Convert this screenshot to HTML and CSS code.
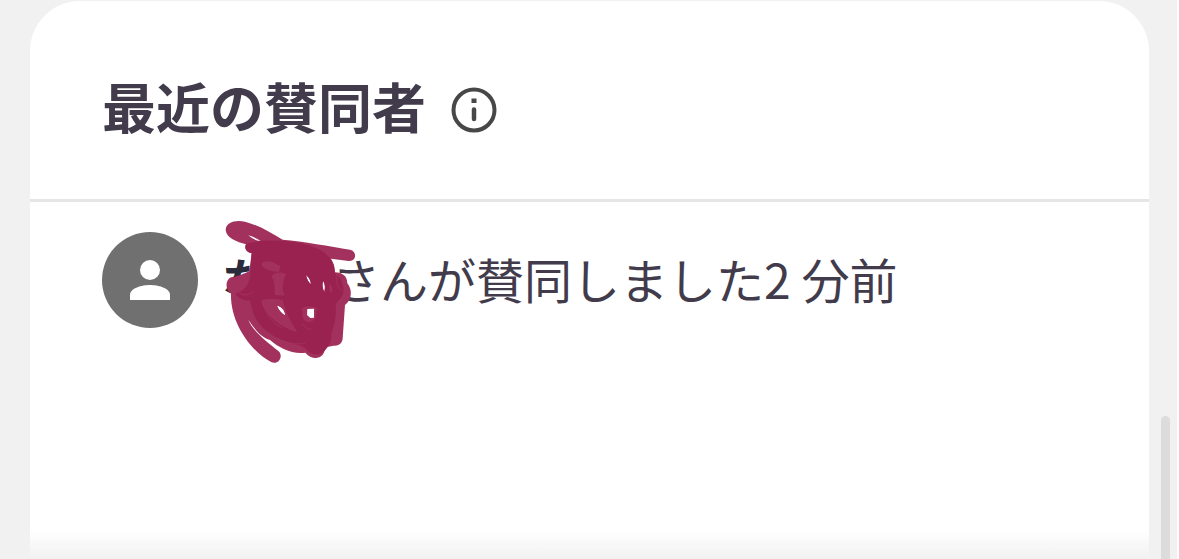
FILE: index.html
```
<!DOCTYPE html>
<html lang="ja">
<head>
  <meta charset="UTF-8" />
  <title>最近の賛同者</title>
  <meta name="viewport" content="width=device-width, initial-scale=1.0" />
  <link rel="stylesheet" href="styles.css">
</head>
<body>

  <section class="card">
    <header class="card-header">
      <h2>最近の賛同者</h2>
      <button class="info-btn" type="button" aria-label="詳細">
        <svg viewBox="0 0 46 46" aria-hidden="true">
          <circle cx="23" cy="23" r="20.5" fill="none" stroke="currentColor" stroke-width="4" />
          <rect x="20.5" y="11.5" width="5" height="4.5" fill="currentColor" />
          <path d="M23 22.500v9.500" stroke="currentColor" stroke-width="4.500" stroke-linecap="round" />
        </svg>
      </button>
    </header>

    <ul class="supporters">
      <li class="supporter">
        <svg class="avatar" viewBox="0 0 96 96" aria-hidden="true">
          <circle cx="48" cy="48" r="48" fill="#707070" />
          <circle cx="48" cy="38" r="10" fill="#fff" />
          <path d="M28 68v-5c0-7 12-10 20-10s20 3 20 10v5z" fill="#fff" />
        </svg>
        <p>
          <span class="name"><strong>な</strong>
            <svg class="scribble" viewBox="0 0 420 450" aria-hidden="true">
              <path class="ink" d="M17 45C18 22 45 14 75 20C115 30 155 55 188 74C250 78 330 95 390 104C412 108 410 140 386 138L333 131C340 142 345 155 345 172C362 172 382 180 382 205C398 225 396 255 375 270L368 370C368 385 355 394 340 392L322 396C310 408 315 415 303 424C290 434 268 428 256 413C215 418 180 400 150 375C125 368 105 345 85 314C98 348 140 380 175 408C192 422 176 450 155 442C100 415 30 330 33 235C15 225 15 195 33 187C50 184 65 180 88 168L95 114C80 114 72 100 78 88C50 80 20 70 17 45Z
                M85 61C96 70 106 77 122 78C110 70 98 65 85 61Z
                M258 180C261 192 265 202 273 208C272 195 266 186 258 180Z
                M309 198C306 210 308 222 313 231C316 217 315 206 309 198Z
                M172 273C178 286 186 295 195 300C193 287 185 277 172 273Z
                M262 282L261 300L271 309L282 308L282 281Z" />
              <path class="ink-layer" d="M78 88C120 72 190 75 250 86C295 98 325 113 338 145C346 160 340 175 354 184C372 199 378 239 358 254L347 266C350 300 343 337 333 358C338 382 322 401 303 416C288 424 266 414 254 398C225 385 180 382 146 352C115 333 97 299 90 256C70 259 50 247 47 235C68 230 87 213 90 184L95 114C80 114 72 100 78 88Z
                M124 150C128 132 157 138 181 154L177 171C161 170 133 166 124 150Z
                M154 183C164 170 184 170 199 178C183 204 188 230 194 242L165 240C164 218 164 200 154 183Z
                M124 256C149 250 168 252 188 256C196 290 214 326 232 351C199 345 134 309 124 256Z
                M258 180C261 192 265 202 273 208C272 195 266 186 258 180Z
                M309 198C306 210 308 222 313 231C316 217 315 206 309 198Z
                M246 281C251 272 278 274 290 280L287 309C275 326 258 325 248 309Z
                M328 205C339 216 340 229 330 235Z" />
              <path class="ink-hole" d="M172 273C178 286 186 295 195 300C193 287 185 277 172 273Z" />
              <path class="ink-line" d="M164 153c8 3 12 3 17 1M172 180v60M164 237h15M128 263c8 31 28 62 58 76M248 327c8 12 18 17 30 15" />
              <path class="ink-line" d="M172 370c28 15 58 20 84 15M349 180c-2 20 5 40 18 49M55 232c18 12 36 8 46-4" />
            </svg>
          </span><span>さんが賛同しました</span><time>2 分前</time>
        </p>
      </li>
    </ul>
  </section>

  <div class="bottom-fade"></div>
  <div class="scroll-thumb"></div>

</body>
</html>
```

FILE: styles.css
```
* {
  box-sizing: border-box;
}

body {
  margin: 0;
  min-height: 100vh;
  padding: 1px 28px 0 30px;
  display: flex;
  flex-direction: column;
  background: #f1f1f1;
  border-right: 2px solid #fff;
  color: #413b4b;
  font-family: "Noto Sans CJK JP", sans-serif;
}

.card {
  flex: 1;
  background: #fff;
  border-radius: 50px 50px 0 0;
}

.card-header {
  display: flex;
  align-items: center;
  gap: 25px;
  padding: 69px 72px 49px;
  border-bottom: 3px solid #e6e6e6;
}

.card-header h2 {
  margin: 0;
  padding-bottom: 8px;
  font-size: 54px;
  line-height: 72px;
  font-weight: 700;
}

.info-btn {
  width: 46px;
  height: 46px;
  padding: 0;
  border: none;
  background: none;
  color: #474747;
  cursor: pointer;
}

.info-btn svg {
  display: block;
}

.supporters {
  list-style: none;
  margin: 0;
  padding: 30px 72px;
}

.supporter {
  display: flex;
  align-items: center;
  gap: 24px;
}

.avatar {
  width: 96px;
  height: 96px;
  flex-shrink: 0;
}

.supporter p {
  margin: 0;
  padding-bottom: 4px;
  display: flex;
  font-size: 48px;
  line-height: 72px;
}

.name {
  position: relative;
  width: 110px;
  color: #2b2c3b;
}

/* pen marks drawn over the name */
.scribble {
  position: absolute;
  top: -27px;
  left: -2px;
  width: 140px;
  height: 150px;
}

.ink {
  fill: #a2315d;
  fill-rule: evenodd;
}

.ink-layer {
  fill: #9a2250;
  fill-rule: evenodd;
}

.ink-hole {
  fill: #fff;
}

.ink-line {
  fill: none;
  stroke: #a73862;
  stroke-width: 2;
}

.bottom-fade {
  position: fixed;
  left: 30px;
  right: 30px;
  bottom: 0;
  height: 28px;
  background: linear-gradient(to bottom, rgba(241, 241, 241, 0), #f1f1f1);
}

.scroll-thumb {
  position: fixed;
  right: 9px;
  bottom: 0;
  width: 9px;
  height: 143px;
  border-radius: 5px 5px 0 0;
  background: #dcdcdc;
}
```
